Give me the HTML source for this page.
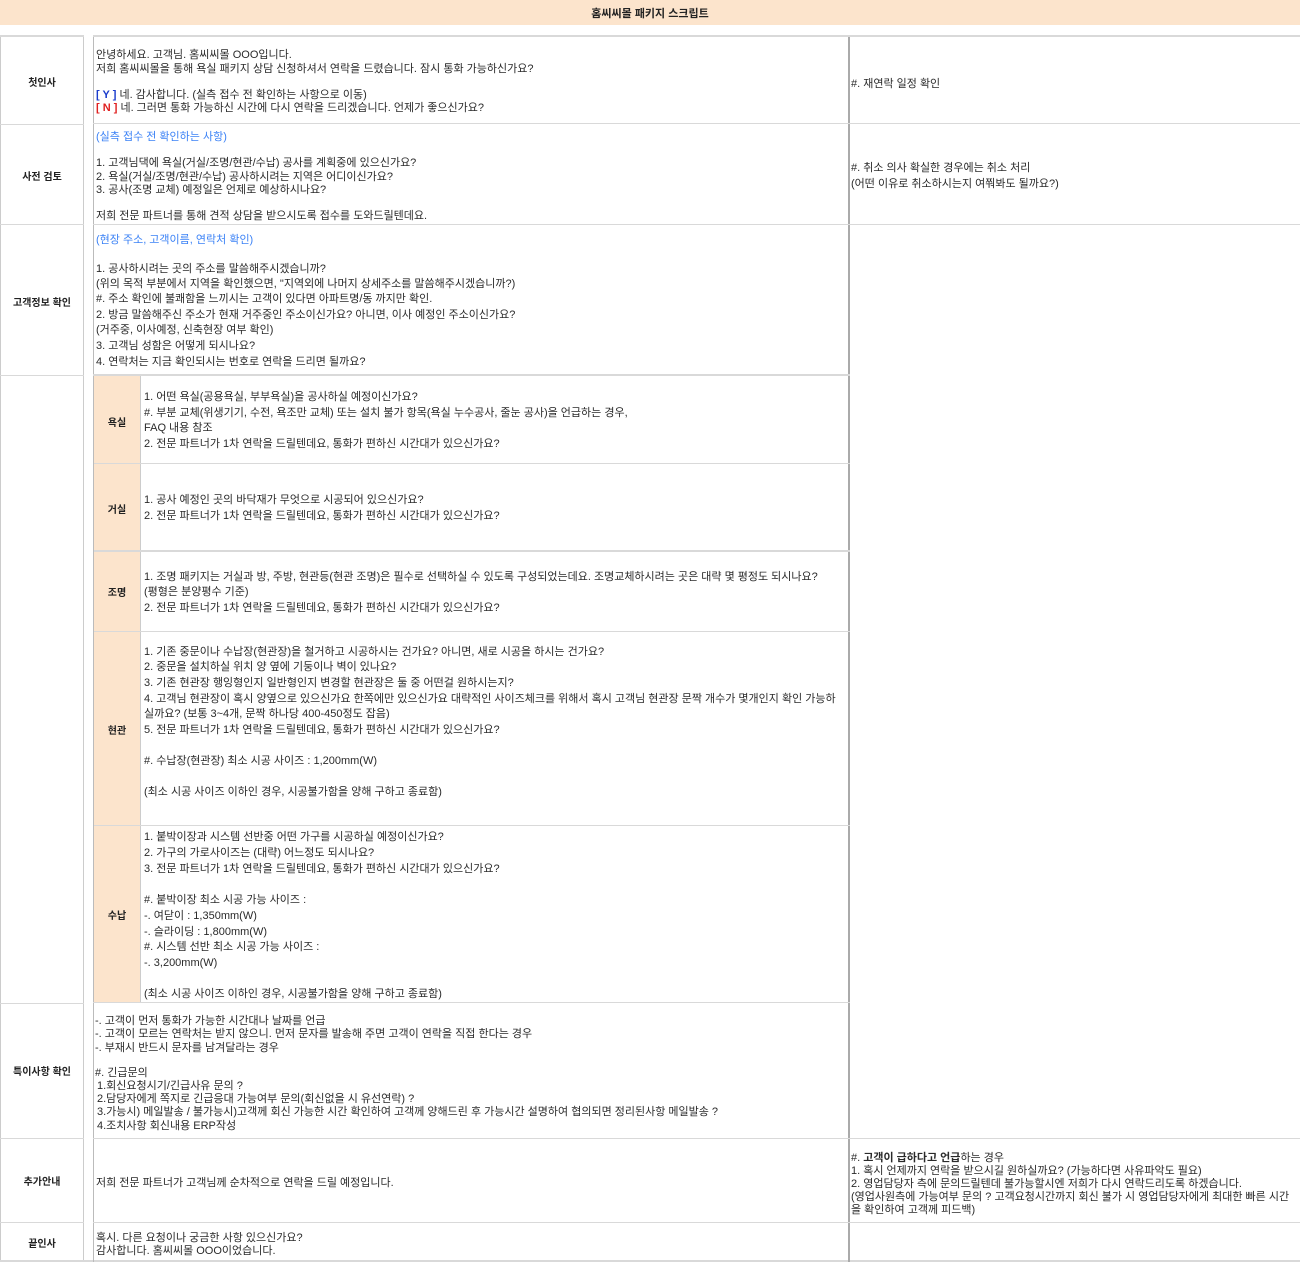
<!DOCTYPE html>
<html><head><meta charset="utf-8">
<style>
html,body{margin:0;padding:0;background:#fff;}
body{width:1300px;height:1262px;position:relative;overflow:hidden;font-family:"Liberation Sans","Noto Sans CJK KR","NanumGothic",sans-serif;color:#222;}
.b{position:absolute;box-sizing:border-box;}
.t{position:absolute;font-size:11px;line-height:12px;white-space:nowrap;margin-top:2px;color:#2a2a2a;}
.l{position:absolute;font-size:10px;line-height:12px;font-weight:bold;white-space:nowrap;text-align:center;margin-top:2px;}
.bl{color:#3b82f6;}
.hl{background:#d9d9d9;}
.pe{background:#fce4cc;}
</style></head><body>
<div class="b pe" style="left:0;top:0;width:1300px;height:25px;"></div>
<div class="l" style="left:0;width:1300px;top:6px;font-size:11px;">홈씨씨몰 패키지 스크립트</div>

<div class="b" style="left:0;top:35px;width:84px;height:1227px;border-left:1px solid #ccc;border-right:1px solid #ccc;"></div>
<div class="b hl" style="left:0;top:35px;width:84px;height:2px;"></div>
<div class="b hl" style="left:0;top:124px;width:84px;height:1px;"></div>
<div class="b hl" style="left:0;top:224px;width:84px;height:1px;"></div>
<div class="b hl" style="left:0;top:375px;width:84px;height:1px;"></div>
<div class="b hl" style="left:0;top:1003px;width:84px;height:1px;"></div>
<div class="b hl" style="left:0;top:1138px;width:84px;height:1px;"></div>
<div class="b hl" style="left:0;top:1222px;width:84px;height:1px;"></div>
<div class="b hl" style="left:0;top:1260px;width:1300px;height:2px;"></div>

<div class="b" style="left:93px;top:35px;width:757px;height:1227px;border-left:1px solid #bbb;border-right:2px solid #aaa;"></div>
<div class="b hl" style="left:93px;top:35px;width:1207px;height:2px;"></div>
<div class="b hl" style="left:93px;top:123px;width:1207px;height:1px;"></div>
<div class="b hl" style="left:93px;top:224px;width:1207px;height:1px;"></div>
<div class="b hl" style="left:93px;top:374px;width:757px;height:2px;"></div>
<div class="b pe" style="left:94px;top:376px;width:46px;height:627px;"></div>
<div class="b" style="left:140px;top:376px;width:1px;height:627px;background:#ccc;"></div>
<div class="b hl" style="left:94px;top:463px;width:756px;height:1px;"></div>
<div class="b hl" style="left:94px;top:550px;width:756px;height:2px;"></div>
<div class="b hl" style="left:94px;top:631px;width:756px;height:1px;"></div>
<div class="b hl" style="left:94px;top:825px;width:756px;height:1px;"></div>
<div class="b hl" style="left:93px;top:1002px;width:757px;height:1px;"></div>
<div class="b hl" style="left:93px;top:1138px;width:1207px;height:1px;"></div>
<div class="b hl" style="left:93px;top:1222px;width:1207px;height:1px;"></div>

<div class="l" style="left:0;width:84px;top:76px;">첫인사</div>
<div class="l" style="left:0;width:84px;top:170px;">사전 검토</div>
<div class="l" style="left:0;width:84px;top:296px;">고객정보 확인</div>
<div class="l" style="left:94px;width:46px;top:416px;">욕실</div>
<div class="l" style="left:94px;width:46px;top:503px;">거실</div>
<div class="l" style="left:94px;width:46px;top:586px;">조명</div>
<div class="l" style="left:94px;width:46px;top:724px;">현관</div>
<div class="l" style="left:94px;width:46px;top:909px;">수납</div>
<div class="l" style="left:0;width:84px;top:1065px;">특이사항 확인</div>
<div class="l" style="left:0;width:84px;top:1175px;">추가안내</div>
<div class="l" style="left:0;width:84px;top:1237px;">끝인사</div>

<div class="t" style="left:96px;top:47px;">안녕하세요. 고객님. 홈씨씨몰 OOO입니다.</div>
<div class="t" style="left:96px;top:61px;">저희 홈씨씨몰을 통해 욕실 패키지 상담 신청하셔서 연락을 드렸습니다. 잠시 통화 가능하신가요?</div>
<div class="t" style="left:96px;top:87px;"><b style="color:#1a3ccc">[ Y ]</b> 네. 감사합니다. (실측 접수 전 확인하는 사항으로 이동)</div>
<div class="t" style="left:96px;top:100px;"><b style="color:#e02020">[ N ]</b> 네. 그러면 통화 가능하신 시간에 다시 연락을 드리겠습니다. 언제가 좋으신가요?</div>
<div class="t" style="left:851px;top:76px;">#. 재연락 일정 확인</div>

<div class="t bl" style="left:96px;top:129px;">(실측 접수 전 확인하는 사항)</div>
<div class="t" style="left:96px;top:155px;">1. 고객님댁에 욕실(거실/조명/현관/수납) 공사를 계획중에 있으신가요?</div>
<div class="t" style="left:96px;top:169px;">2. 욕실(거실/조명/현관/수납) 공사하시려는 지역은 어디이신가요?</div>
<div class="t" style="left:96px;top:182px;">3. 공사(조명 교체) 예정일은 언제로 예상하시나요?</div>
<div class="t" style="left:96px;top:208px;">저희 전문 파트너를 통해 견적 상담을 받으시도록 접수를 도와드릴텐데요.</div>
<div class="t" style="left:851px;top:160px;">#. 취소 의사 확실한 경우에는 취소 처리</div>
<div class="t" style="left:851px;top:176px;">(어떤 이유로 취소하시는지 여쭤봐도 될까요?)</div>

<div class="t bl" style="left:96px;top:232px;">(현장 주소, 고객이름, 연락처 확인)</div>
<div class="t" style="left:96px;top:261px;">1. 공사하시려는 곳의 주소를 말씀해주시겠습니까?</div>
<div class="t" style="left:96px;top:276px;">(위의 목적 부분에서 지역을 확인했으면, "지역외에 나머지 상세주소를 말씀해주시겠습니까?)</div>
<div class="t" style="left:96px;top:291px;">#. 주소 확인에 불쾌함을 느끼시는 고객이 있다면 아파트명/동 까지만 확인.</div>
<div class="t" style="left:96px;top:307px;">2. 방금 말씀해주신 주소가 현재 거주중인 주소이신가요? 아니면, 이사 예정인 주소이신가요?</div>
<div class="t" style="left:96px;top:322px;">(거주중, 이사예정, 신축현장 여부 확인)</div>
<div class="t" style="left:96px;top:338px;">3. 고객님 성함은 어떻게 되시나요?</div>
<div class="t" style="left:96px;top:354px;">4. 연락처는 지금 확인되시는 번호로 연락을 드리면 될까요?</div>

<div class="t" style="left:144px;top:389px;">1. 어떤 욕실(공용욕실, 부부욕실)을 공사하실 예정이신가요?</div>
<div class="t" style="left:144px;top:405px;">#. 부분 교체(위생기기, 수전, 욕조만 교체) 또는 설치 불가 항목(욕실 누수공사, 줄눈 공사)을 언급하는 경우,</div>
<div class="t" style="left:144px;top:420px;">FAQ 내용 참조</div>
<div class="t" style="left:144px;top:436px;">2. 전문 파트너가 1차 연락을 드릴텐데요, 통화가 편하신 시간대가 있으신가요?</div>
<div class="t" style="left:144px;top:492px;">1. 공사 예정인 곳의 바닥재가 무엇으로 시공되어 있으신가요?</div>
<div class="t" style="left:144px;top:508px;">2. 전문 파트너가 1차 연락을 드릴텐데요, 통화가 편하신 시간대가 있으신가요?</div>
<div class="t" style="left:144px;top:569px;">1. 조명 패키지는 거실과 방, 주방, 현관등(현관 조명)은 필수로 선택하실 수 있도록 구성되었는데요. 조명교체하시려는 곳은 대략 몇 평정도 되시나요?</div>
<div class="t" style="left:144px;top:584px;">(평형은 분양평수 기준)</div>
<div class="t" style="left:144px;top:600px;">2. 전문 파트너가 1차 연락을 드릴텐데요, 통화가 편하신 시간대가 있으신가요?</div>
<div class="t" style="left:144px;top:644px;">1. 기존 중문이나 수납장(현관장)을 철거하고 시공하시는 건가요? 아니면, 새로 시공을 하시는 건가요?</div>
<div class="t" style="left:144px;top:659px;">2. 중문을 설치하실 위치 양 옆에 기둥이나 벽이 있나요?</div>
<div class="t" style="left:144px;top:675px;">3. 기존 현관장 행잉형인지 일반형인지 변경할 현관장은 둘 중 어떤걸 원하시는지?</div>
<div class="t" style="left:144px;top:691px;">4. 고객님 현관장이 혹시 양옆으로 있으신가요 한쪽에만 있으신가요 대략적인 사이즈체크를 위해서 혹시 고객님 현관장 문짝 개수가 몇개인지 확인 가능하</div>
<div class="t" style="left:144px;top:706px;">실까요? (보통 3~4개, 문짝 하나당 400-450정도 잡음)</div>
<div class="t" style="left:144px;top:722px;">5. 전문 파트너가 1차 연락을 드릴텐데요, 통화가 편하신 시간대가 있으신가요?</div>
<div class="t" style="left:144px;top:753px;">#. 수납장(현관장) 최소 시공 사이즈 : 1,200mm(W)</div>
<div class="t" style="left:144px;top:784px;">(최소 시공 사이즈 이하인 경우, 시공불가함을 양해 구하고 종료함)</div>
<div class="t" style="left:144px;top:829px;">1. 붙박이장과 시스템 선반중 어떤 가구를 시공하실 예정이신가요?</div>
<div class="t" style="left:144px;top:845px;">2. 가구의 가로사이즈는 (대략) 어느정도 되시나요?</div>
<div class="t" style="left:144px;top:861px;">3. 전문 파트너가 1차 연락을 드릴텐데요, 통화가 편하신 시간대가 있으신가요?</div>
<div class="t" style="left:144px;top:892px;">#. 붙박이장 최소 시공 가능 사이즈 :</div>
<div class="t" style="left:144px;top:908px;">-. 여닫이 : 1,350mm(W)</div>
<div class="t" style="left:144px;top:924px;">-. 슬라이딩 : 1,800mm(W)</div>
<div class="t" style="left:144px;top:939px;">#. 시스템 선반 최소 시공 가능 사이즈 :</div>
<div class="t" style="left:144px;top:955px;">-. 3,200mm(W)</div>
<div class="t" style="left:144px;top:986px;">(최소 시공 사이즈 이하인 경우, 시공불가함을 양해 구하고 종료함)</div>

<div class="t" style="left:95px;top:1013px;">-. 고객이 먼저 통화가 가능한 시간대나 날짜를 언급</div>
<div class="t" style="left:95px;top:1026px;">-. 고객이 모르는 연락처는 받지 않으니. 먼저 문자를 발송해 주면 고객이 연락을 직접 한다는 경우</div>
<div class="t" style="left:95px;top:1040px;">-. 부재시 반드시 문자를 남겨달라는 경우</div>
<div class="t" style="left:95px;top:1065px;">#. 긴급문의</div>
<div class="t" style="left:97px;top:1078px;">1.회신요청시기/긴급사유 문의 ?</div>
<div class="t" style="left:97px;top:1091px;">2.담당자에게 쪽지로 긴급응대 가능여부 문의(회신없을 시 유선연락) ?</div>
<div class="t" style="left:97px;top:1104px;">3.가능시) 메일발송 / 불가능시)고객께 회신 가능한 시간 확인하여 고객께 양해드린 후 가능시간 설명하여 협의되면 정리된사항 메일발송 ?</div>
<div class="t" style="left:97px;top:1118px;">4.조치사항 회신내용 ERP작성</div>

<div class="t" style="left:96px;top:1175px;">저희 전문 파트너가 고객님께 순차적으로 연락을 드릴 예정입니다.</div>
<div class="t" style="left:851px;top:1150px;">#. <b>고객이 급하다고 언급</b>하는 경우</div>
<div class="t" style="left:851px;top:1163px;">1. 혹시 언제까지 연락을 받으시길 원하실까요? (가능하다면 사유파악도 필요)</div>
<div class="t" style="left:851px;top:1176px;">2. 영업담당자 측에 문의드릴텐데 불가능할시엔 저희가 다시 연락드리도록 하겠습니다.</div>
<div class="t" style="left:851px;top:1189px;">(영업사원측에 가능여부 문의 ? 고객요청시간까지 회신 불가 시 영업담당자에게 최대한 빠른 시간</div>
<div class="t" style="left:851px;top:1202px;">을 확인하여 고객께 피드백)</div>

<div class="t" style="left:96px;top:1230px;">혹시. 다른 요청이나 궁금한 사항 있으신가요?</div>
<div class="t" style="left:96px;top:1243px;">감사합니다. 홈씨씨몰 OOO이었습니다.</div>
</body></html>
